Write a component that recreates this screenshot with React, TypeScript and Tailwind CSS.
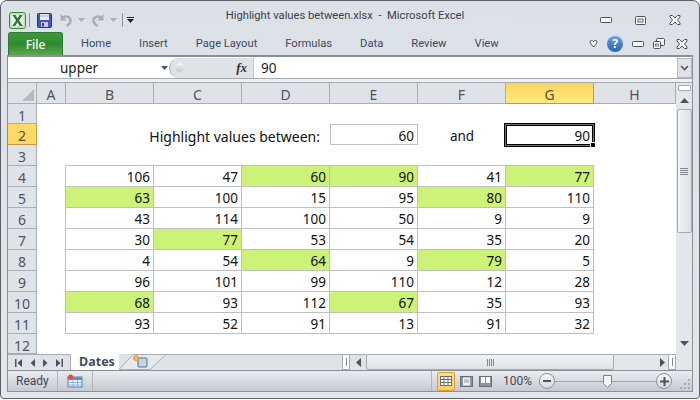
import { ReactNode } from "react";

const rows: [number, boolean][][] = [
  [[106, false], [47, false], [60, true], [90, true], [41, false], [77, true]],
  [[63, true], [100, false], [15, false], [95, false], [80, true], [110, false]],
  [[43, false], [114, false], [100, false], [50, false], [9, false], [9, false]],
  [[30, false], [77, true], [53, false], [54, false], [35, false], [20, false]],
  [[4, false], [54, false], [64, true], [9, false], [79, true], [5, false]],
  [[96, false], [101, false], [99, false], [110, false], [12, false], [28, false]],
  [[68, true], [93, false], [112, false], [67, true], [35, false], [93, false]],
  [[93, false], [52, false], [91, false], [13, false], [91, false], [32, false]],
];

const tabs = ["Home", "Insert", "Page Layout", "Formulas", "Data", "Review", "View"];
const cols = ["B", "C", "D", "E", "F"];

function ColHead({ children, active }: { children: ReactNode; active?: boolean }) {
  return (
    <div
      className={
        active
          ? "flex items-center justify-center border-r border-b border-[#c29a45] bg-gradient-to-b from-[#fdd45f] to-[#ffe97c] pt-[3px] text-[14px] text-[#5a5030]"
          : "flex items-center justify-center border-r border-b border-[#a9aeb4] bg-[#dfe3e8] pt-[3px] text-[14px] text-[#4b5362]"
      }
    >
      {children}
    </div>
  );
}

function RowHead({ n, active }: { n: number; active?: boolean }) {
  return (
    <div
      className={
        active
          ? "flex items-center justify-center border-r border-b border-[#c29a45] bg-[#ffd966] pt-[4px] text-[14px] text-[#5a5030]"
          : "flex items-center justify-center border-r border-b border-[#a9aeb4] bg-[#dfe3e8] pt-[4px] text-[14px] text-[#4b5362]"
      }
    >
      {n}
    </div>
  );
}

function ExcelIcon() {
  return (
    <svg width="17" height="17" viewBox="0 0 17 17">
      <rect x="0.5" y="0.5" width="16" height="16" rx="2" fill="#dcebd3" stroke="#3d8a3d" />
      <rect x="2" y="2" width="13" height="13" fill="#f8fbf5" stroke="#8fbf8a" strokeWidth="0.7" />
      <path d="M3.500 3h3l2 3.600L10.600 3h3l-3.600 5.400 3.900 5.600h-3.100l-2.300-3.800L6.200 14H3.200l3.900-5.600z" fill="#1f7a2e" />
    </svg>
  );
}

function SaveIcon() {
  return (
    <svg width="15" height="15" viewBox="0 0 15 15">
      <rect x="0.5" y="0.5" width="14" height="14" rx="1" fill="#4a55b8" stroke="#2b3384" />
      <rect x="3" y="1" width="9" height="6" fill="#e9edf7" />
      <rect x="3" y="2.500" width="9" height="1" fill="#aab4d8" />
      <rect x="4" y="9" width="7" height="5" fill="#c5cbe6" />
      <rect x="5" y="10" width="2" height="3.500" fill="#3d4693" />
    </svg>
  );
}

function UndoIcon({ flip }: { flip?: boolean }) {
  return (
    <svg width="12" height="14" viewBox="0 0 12 14" className={flip ? "-scale-x-100" : ""}>
      <path d="M0.500 1v6.500H7L4.700 5.200" fill="#a9aeb5" />
      <path d="M3 4.500C6 2.500 10.500 3.800 10.500 7.500c0 2.200-1.500 4-4 5.500" fill="none" stroke="#a9aeb5" strokeWidth="2.600" />
    </svg>
  );
}

function TinyCaret({ color }: { color: string }) {
  return (
    <svg width="7" height="4" viewBox="0 0 7 4">
      <path d="M0 0h7L3.500 4z" fill={color} />
    </svg>
  );
}

function WinMin() {
  return (
    <svg width="12" height="6" viewBox="0 0 12 6">
      <rect x="0.5" y="0.5" width="11" height="5" rx="1" fill="#f4f6f8" stroke="#4b535e" />
    </svg>
  );
}

function WinMax() {
  return (
    <svg width="11" height="9" viewBox="0 0 11 9">
      <rect x="0.5" y="0.5" width="10" height="8" rx="1" fill="#f4f6f8" stroke="#4b535e" />
      <rect x="3" y="3" width="5" height="3" fill="#dfe3e8" stroke="#4b535e" strokeWidth="0.8" />
    </svg>
  );
}

function WinRestore() {
  return (
    <svg width="12" height="11" viewBox="0 0 12 11">
      <rect x="3.500" y="0.5" width="8" height="7" rx="1" fill="#f4f6f8" stroke="#4b535e" />
      <rect x="0.5" y="3.500" width="7" height="7" rx="1" fill="#f4f6f8" stroke="#4b535e" />
      <rect x="2.500" y="6" width="3" height="2" fill="#dfe3e8" stroke="#4b535e" strokeWidth="0.7" />
    </svg>
  );
}

function WinClose() {
  return (
    <svg width="12" height="10" viewBox="0 0 12 10">
      <path d="M1 .5h2.500L6 3l2.500-2.500H11v1.500L8.500 5 11 8v1.500H8.500L6 7 3.500 9.500H1V8l2.500-3L1 2z" fill="#f4f6f8" stroke="#4b535e" />
    </svg>
  );
}

function SplitV() {
  return (
    <div className="flex h-[7px] w-full items-center justify-center">
      <div className="h-[6px] w-[13px] rounded-[1px] border border-[#a5aab1] bg-white" />
    </div>
  );
}

function Grip({ vertical }: { vertical?: boolean }) {
  return (
    <div className={vertical ? "flex flex-col gap-[1px]" : "flex gap-[1px]"}>
      <div className={vertical ? "h-px w-[8px] bg-[#80868e]" : "h-[7px] w-px bg-[#80868e]"} />
      <div className={vertical ? "h-px w-[8px] bg-[#80868e]" : "h-[7px] w-px bg-[#80868e]"} />
      <div className={vertical ? "h-px w-[8px] bg-[#80868e]" : "h-[7px] w-px bg-[#80868e]"} />
      <div className={vertical ? "h-px w-[8px] bg-[#80868e]" : "h-[7px] w-px bg-[#80868e]"} />
    </div>
  );
}

function NavIcon({ d }: { d: string }) {
  return (
    <svg width="7" height="8" viewBox="0 0 7 8">
      <path d={d} fill="#4b535e" />
    </svg>
  );
}

export default function App() {
  return (
    <div className="h-[400px] w-[700px] overflow-hidden bg-white font-['Noto_Sans',sans-serif]">
      <div className="flex h-[399px] w-[700px] flex-col rounded-t-[7px] rounded-b-[4px] border border-[#5d6167] bg-gradient-to-b from-[#dce1e7] to-[#e3e6eb] px-[6px]">
        {/* title bar */}
        <div className="flex h-[31px] shrink-0 items-center">
          <div className="flex flex-1 items-center pl-[2px] pt-[7px]">
            <ExcelIcon />
            <div className="ml-[3px] h-[14px] w-px bg-[#8f949a]" />
            <div className="ml-[7px]"><SaveIcon /></div>
            <div className="ml-[8px]"><UndoIcon /></div>
            <div className="ml-[6px]"><TinyCaret color="#a9aeb5" /></div>
            <div className="ml-[7px]"><UndoIcon flip /></div>
            <div className="ml-[6px]"><TinyCaret color="#a9aeb5" /></div>
            <div className="ml-[5px] h-[14px] w-px bg-[#8f949a]" />
            <div className="ml-[4px] flex flex-col items-center gap-[1px]">
              <div className="h-px w-[7px] bg-[#222]" />
              <TinyCaret color="#222" />
            </div>
          </div>
          <div className="whitespace-nowrap pb-[1px] font-['Roboto',sans-serif] text-[11.200px] text-[#3b4048]">
            Highlight values between.xlsx&nbsp; -&nbsp; Microsoft Excel
          </div>
          <div className="flex flex-1 items-center justify-end gap-[23px] pr-[12px] pt-[7px]">
            <WinMin />
            <WinMax />
            <WinClose />
          </div>
        </div>

        {/* ribbon tabs */}
        <div className="flex h-[23px] shrink-0 items-center pl-[1px]">
          <div className="flex h-[23px] w-[55px] items-center justify-center rounded-t-[3px] border border-b-0 border-[#2f7a35] bg-gradient-to-b from-[#3f9a3d] via-[#2f8a2f] to-[#5aa84e] pt-[2px] text-[12px] font-medium text-white">
            File
          </div>
          <div className="ml-[18px] flex gap-[28px] pt-px font-['Roboto',sans-serif] text-[11.200px] text-[#3b4a5e]">
            {tabs.map((t) => (
              <span key={t} className="whitespace-nowrap">{t}</span>
            ))}
          </div>
          <div className="ml-auto flex items-center pr-[5px]">
            <svg width="9" height="8" viewBox="0 0 9 8">
              <path d="M1 1.500C1 .5 3 .2 4.500 1.500 6 .2 8 .5 8 1.500c0 2-2 3.500-3.500 5.500C3 5 1 3.500 1 1.500z" fill="#f4f6f8" stroke="#4b535e" />
            </svg>
            <div className="ml-[9px] flex h-[16px] w-[16px] items-center justify-center rounded-full bg-gradient-to-b from-[#6d9fe0] to-[#2a62b8] text-[12px] font-bold leading-none text-white">
              ?
            </div>
            <div className="ml-[9px]"><WinMin /></div>
            <div className="ml-[9px]"><WinRestore /></div>
            <div className="ml-[11px]"><WinClose /></div>
          </div>
        </div>

        {/* formula bar + sheet */}
        <div className="flex min-h-0 flex-col border-x border-[#8b9097]">
          <div className="h-[2px] shrink-0 -mx-px bg-[#8b9097]" />
          <div className="flex h-[21px] shrink-0 items-center bg-white pt-px text-[13.5px] text-[#1c1c1c]">
            <div className="flex h-full w-[161px] items-center pl-[52px]">
              upper
              <div className="ml-auto pr-[1px]"><TinyCaret color="#4b535e" /></div>
            </div>
            <div className="relative flex h-full w-[84px] items-center justify-end rounded-l-full border-l border-[#a9aeb4] bg-[#dfe3e8] pr-[6px]">
              <div className="absolute top-[5px] left-[5px] h-[9px] w-[9px] rounded-full bg-gradient-to-b from-[#f4f5f7] to-[#c3c7cc]" />
              <span className="font-['Liberation_Serif',serif] text-[13px] font-bold italic text-[#333]">fx</span>
            </div>
            <div className="h-full w-px bg-[#c4c8cd]" />
            <div className="flex-1 pl-[7px]">90</div>
            <div className="flex h-full w-[15px] items-center justify-center border border-[#b5b9bf] bg-[#dfe3e8]">
              <svg width="9" height="6" viewBox="0 0 9 6">
                <path d="M1 1l3.500 3.500L8 1" fill="none" stroke="#555" strokeWidth="1.600" />
              </svg>
            </div>
          </div>
          <div className="h-[5px] shrink-0 border-y border-[#a5aab1] bg-[#eef0f3]" />

          <div className="flex h-[271px] shrink-0">
            <div className="grid w-[668px] grid-cols-[29px_29px_88px_88px_88px_88px_88px_88px_82px] grid-rows-[21px_20px_repeat(10,21px)_20px] bg-white text-[13.5px] leading-none text-[#111]">
              {/* column headers */}
              <div className="flex items-end justify-end border-r border-b border-[#a9aeb4] bg-[#dfe3e8] p-[2px]">
                <svg width="12" height="12" viewBox="0 0 12 12">
                  <path d="M12 0v12H0z" fill="#b6bbc1" />
                </svg>
              </div>
              <ColHead>A</ColHead>
              {cols.map((c) => (
                <ColHead key={c}>{c}</ColHead>
              ))}
              <ColHead active>G</ColHead>
              <ColHead>H</ColHead>

              {/* row 1 */}
              <RowHead n={1} />
              <div className="col-span-8" />

              {/* row 2 */}
              <RowHead n={2} active />
              <div />
              <div />
              <div />
              <div className="flex items-center justify-end whitespace-nowrap pt-[4px] pr-[10px] text-[14px]">
                Highlight values between:
              </div>
              <div className="flex items-center justify-end border border-[#c0c0c0] pt-[4px] pr-[3px]">60</div>
              <div className="flex items-center justify-center pt-[4px]">and</div>
              <div className="relative flex items-center justify-end pt-[4px] pr-[4px]">
                90
                <div className="absolute -top-[1px] -right-[1px] -bottom-[2px] -left-[2px] border border-black">
                  <div className="h-full w-full border border-[#707070]">
                    <div className="h-full w-full border border-black" />
                  </div>
                </div>
                <div className="absolute -right-[2px] -bottom-[3px] h-[6px] w-[6px] border border-white bg-black" />
              </div>
              <div />

              {/* row 3 */}
              <RowHead n={3} />
              <div />
              {rows[0].map((_, i) => (
                <div key={i} className="border-b border-[#c0c0c0]" />
              ))}
              <div />

              {/* rows 4 to 11 */}
              {rows.map((row, r) => (
                <div key={r} className="contents">
                  <RowHead n={r + 4} />
                  <div className="border-r border-[#c0c0c0]" />
                  {row.map(([value, hit], c) => (
                    <div
                      key={c}
                      className={
                        hit
                          ? "flex items-center justify-end border-r border-b border-[#c0c0c0] bg-[#ccf277] pt-[4px] pr-[3px]"
                          : "flex items-center justify-end border-r border-b border-[#c0c0c0] pt-[4px] pr-[3px]"
                      }
                    >
                      {value}
                    </div>
                  ))}
                  <div />
                </div>
              ))}

              {/* row 12 */}
              <RowHead n={12} />
              <div className="col-span-8" />
            </div>

            {/* vertical scrollbar */}
            <div className="flex w-[16px] flex-col items-center bg-[#e3e6eb] pt-px">
              <SplitV />
              <div className="flex h-[18px] w-full items-center justify-center">
                <svg width="9" height="5" viewBox="0 0 9 5">
                  <path d="M4.500 0L9 5H0z" fill="#4b535e" />
                </svg>
              </div>
              <div className="flex h-[124px] w-[15px] items-center justify-center rounded-[2px] border border-[#a5aab1] bg-gradient-to-r from-[#f2f4f6] to-[#dde0e5]">
                <Grip vertical />
              </div>
              <div className="mt-auto flex h-[18px] w-full items-center justify-center pb-[3px]">
                <svg width="9" height="5" viewBox="0 0 9 5">
                  <path d="M0 0h9L4.500 5z" fill="#4b535e" />
                </svg>
              </div>
            </div>
          </div>

          {/* sheet tabs + horizontal scrollbar */}
          <div className="flex h-[16px] shrink-0 bg-[#dfe3e8]">
            <div className="flex w-[63px] items-center justify-between rounded-tr-[2px] border-t border-r border-[#a9aeb4] px-[7px]">
              <NavIcon d="M0 0h1.500v8H0zM7 0v8L2.500 4z" />
              <NavIcon d="M6 0v8L1.500 4z" />
              <NavIcon d="M1 0v8l4.500-4z" />
              <NavIcon d="M7 0H5.500v8H7zM0 0v8l4.500-4z" />
            </div>
            <div className="flex w-[48px] items-center justify-center bg-white pl-[4px] text-[12.5px] font-bold leading-none text-[#434c5c]">
              Dates
            </div>
            <div className="flex w-[47px] items-center">
              <svg width="47" height="16" viewBox="0 0 47 16">
                <path d="M0 15.500L14 .5h33L31 15.500z" fill="#e6e9ed" stroke="#a9aeb4" />
                <rect x="19" y="4" width="9" height="9" rx="1" fill="#c6d3e4" stroke="#5b6f8c" />
                <circle cx="17" cy="4" r="2.500" fill="#f7c04a" stroke="#c98a1e" strokeWidth="0.7" />
              </svg>
            </div>
            <div className="flex-1 border-t border-[#a9aeb4]" />
            <div className="flex h-full w-[8px] items-center justify-center border border-[#a5aab1] bg-white">
              <div className="h-[8px] w-px bg-[#80868e]" />
            </div>
            <div className="flex w-[16px] items-center justify-center border-t border-[#a9aeb4]">
              <svg width="5" height="9" viewBox="0 0 5 9">
                <path d="M5 0v9L0 4.500z" fill="#4b535e" />
              </svg>
            </div>
            <div className="flex w-[248px] items-center justify-center rounded-[2px] border border-[#a5aab1] bg-gradient-to-b from-[#f2f4f6] to-[#dde0e5]">
              <Grip />
            </div>
            <div className="flex w-[54px] items-center justify-end border-t border-[#a9aeb4] bg-[#e3e6eb] pr-[3px]">
              <svg width="5" height="9" viewBox="0 0 5 9">
                <path d="M0 0v9l5-4.500z" fill="#4b535e" />
              </svg>
            </div>
            <div className="flex h-full w-[8px] items-center justify-center border border-[#a5aab1] bg-white">
              <div className="h-[8px] w-px bg-[#80868e]" />
            </div>
            <div className="w-[16px] bg-[#e3e6eb]" />
          </div>
        </div>

        {/* status bar */}
        <div className="flex h-[22px] shrink-0 items-center border border-[#8b9097] bg-gradient-to-b from-[#e9ecf0] to-[#c5cad1] font-['Roboto',sans-serif] text-[12px] text-[#3f4853]">
          <span className="w-[49px] pl-[8px]">Ready</span>
          <div className="h-full w-px bg-[#b0b5bb]" />
          <div className="flex w-[34px] items-center justify-center">
            <svg width="16" height="14" viewBox="0 0 16 14">
              <rect x="1" y="3" width="14" height="10" fill="#eef4fb" stroke="#4f7fb5" />
              <rect x="1" y="3" width="14" height="3" fill="#5b93d0" />
              <path d="M6 6v7M10.500 6v7M1 8.500h14M1 11h14" stroke="#7fa6cf" strokeWidth="0.8" />
              <circle cx="3.500" cy="3" r="2.500" fill="#d9503e" />
            </svg>
          </div>
          <div className="h-full w-px bg-[#b0b5bb]" />
          <div className="ml-auto h-full w-px bg-[#b0b5bb]" />
          <div className="ml-[5px] flex h-[19px] w-[18px] items-center justify-center rounded-[2px] border border-[#d2a13e] bg-gradient-to-b from-[#ffe07e] to-[#ffcf57]">
            <svg width="12" height="10" viewBox="0 0 12 10">
              <rect x="0.5" y="0.5" width="11" height="9" fill="#fff" stroke="#6b6f75" />
              <path d="M4 .5v9M8 .5v9M.5 3.500h11M.5 6.500h11" stroke="#6b6f75" />
            </svg>
          </div>
          <div className="ml-[3px] flex h-[19px] w-[16px] items-center justify-center">
            <svg width="13" height="11" viewBox="0 0 13 11">
              <rect x="0.5" y="0.5" width="12" height="10" fill="#8e9399" stroke="#6b6f75" />
              <rect x="3" y="1.500" width="7" height="8" fill="#f0f1f3" />
              <path d="M4 4h5M4 6h5" stroke="#8e9399" />
            </svg>
          </div>
          <div className="ml-[4px] flex h-[19px] w-[15px] items-center justify-center">
            <svg width="13" height="11" viewBox="0 0 13 11">
              <rect x="0.5" y="0.5" width="12" height="10" fill="#8e9399" stroke="#6b6f75" />
              <rect x="2" y="1" width="4" height="6" fill="#fff" />
              <rect x="7" y="1" width="4" height="6" fill="#fff" />
            </svg>
          </div>
          <span className="ml-[10px] w-[29px] whitespace-nowrap text-[#4a4650]">100%</span>
          <div className="ml-[7px] flex h-[16px] w-[16px] items-center justify-center rounded-full border border-[#8b9097] bg-gradient-to-b from-[#fafbfc] to-[#d5d9de]">
            <div className="h-[2px] w-[8px] bg-[#4b535e]" />
          </div>
          <div className="relative flex w-[101px] items-center">
            <div className="h-px w-full bg-[#9ea3a9]" />
            <svg width="9" height="13" viewBox="0 0 9 13" className="absolute top-[-6px] left-[48px]">
              <path d="M.5 .5h8v8l-4 4-4-4z" fill="#f4f5f7" stroke="#7d8289" />
            </svg>
          </div>
          <div className="flex h-[16px] w-[16px] items-center justify-center rounded-full border border-[#8b9097] bg-gradient-to-b from-[#fafbfc] to-[#d5d9de]">
            <svg width="9" height="9" viewBox="0 0 9 9">
              <path d="M3.500 0h2v3.500H9v2H5.500V9h-2V5.500H0v-2h3.500z" fill="#4b535e" />
            </svg>
          </div>
          <div className="ml-[8px] flex h-full w-[12px] items-end pb-[1px]">
            <svg width="11" height="11" viewBox="0 0 11 11">
              <path d="M8 0h2v2H8zM4 4h2v2H4zM8 4h2v2H8zM0 8h2v2H0zM4 8h2v2H4zM8 8h2v2H8z" fill="#a5aab1" />
            </svg>
          </div>
        </div>
      </div>
    </div>
  );
}
